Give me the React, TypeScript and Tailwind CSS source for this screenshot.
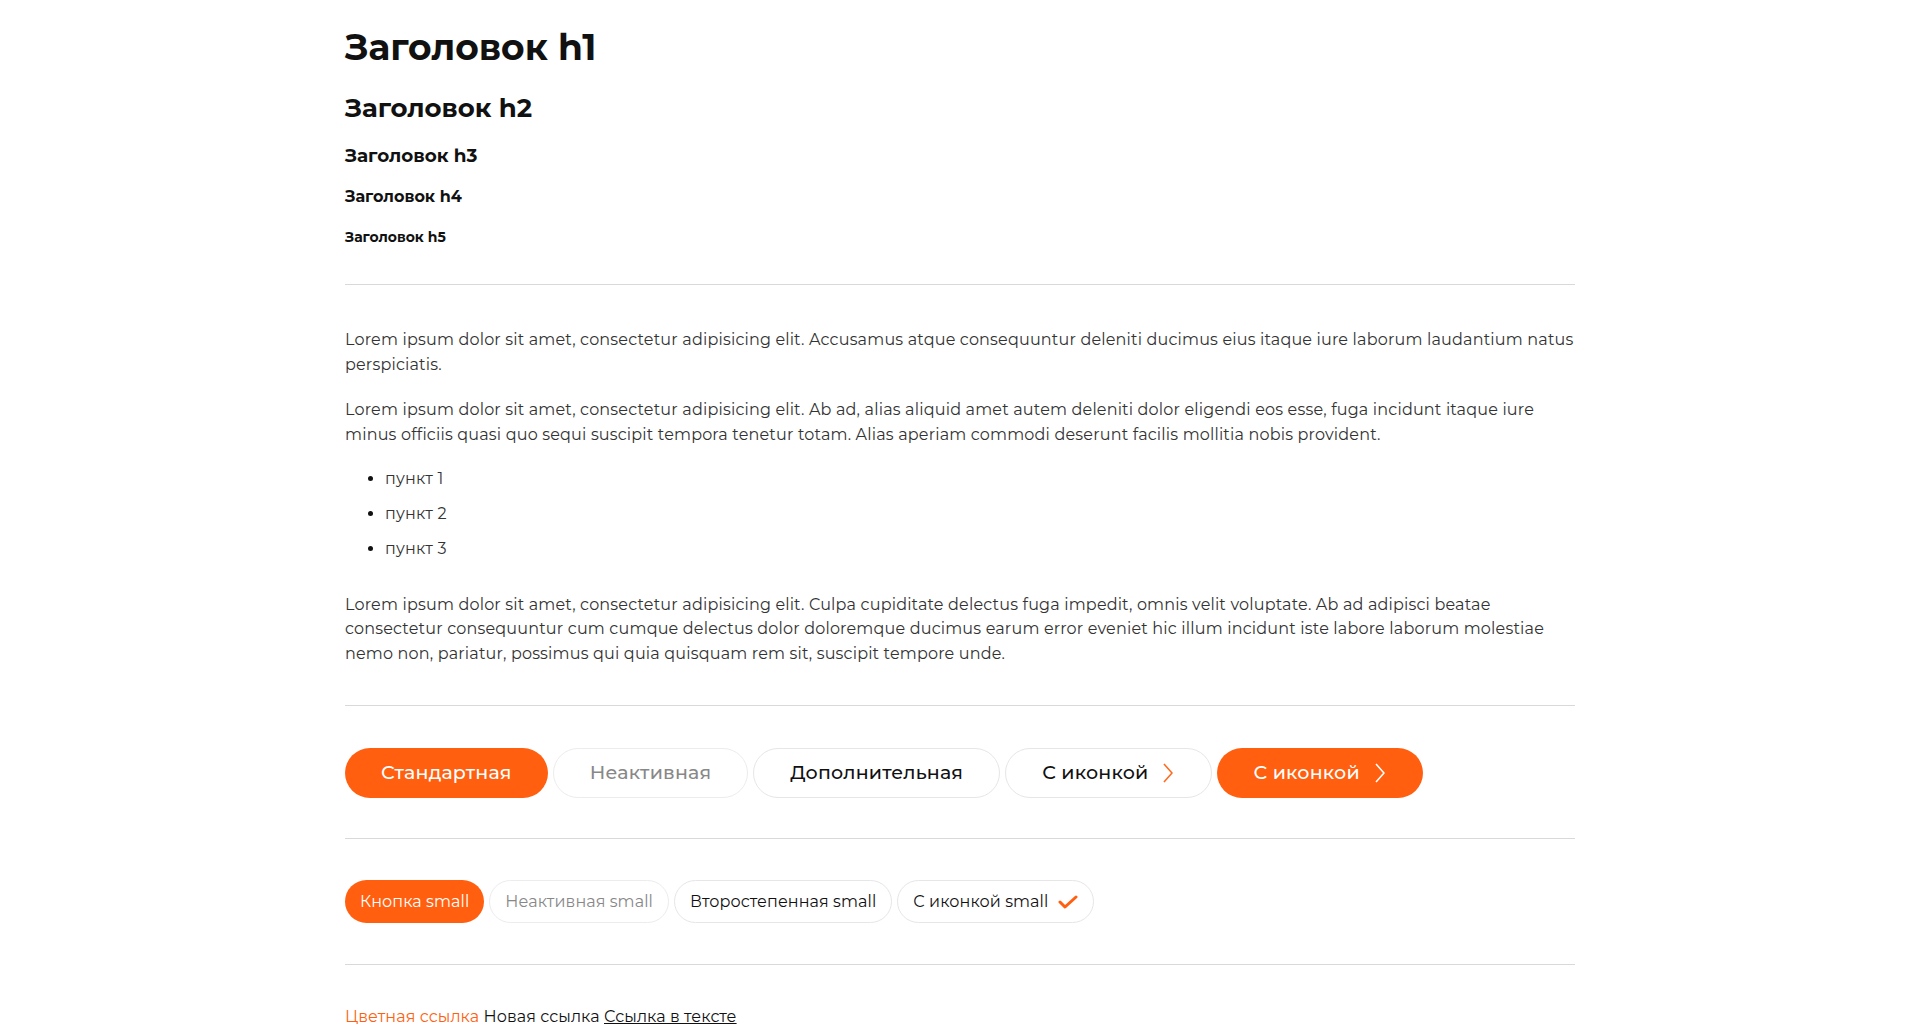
// Типографика и кнопки — страница-витрина UI-кита.
const font = "font-['Montserrat','Open_Sans',sans-serif]";

function Chevron({ className }: { className?: string }) {
  return (
    <svg viewBox="0 0 10 20" className={className} fill="none" stroke="currentColor" strokeWidth="1.6">
      <path d="M1 1l8 9-8 9" />
    </svg>
  );
}

function Check({ className }: { className?: string }) {
  return (
    <svg viewBox="0 0 20 14" className={className} fill="none" stroke="currentColor" strokeWidth="3" strokeLinecap="round" strokeLinejoin="round">
      <path d="M2 7l5 5L18 2" />
    </svg>
  );
}

const btn = "inline-flex items-center justify-center rounded-full h-[50px] px-9 text-[19px] tracking-[0.2px] font-medium";
const btnSm = "inline-flex items-center justify-center rounded-full h-[43px] px-[15px] text-[16px] tracking-[0.08px]";

export default function App() {
  return (
    <div className={`${font} bg-white min-h-screen`}>
      <div className="mx-auto w-[1230px] pt-[25px] pb-10">
        <h1 className="text-[36px] leading-[44px] font-bold text-[#111]">Заголовок h1</h1>
        <h2 className="mt-[23px] text-[26px] leading-[32px] font-bold text-[#111]">Заголовок h2</h2>
        <h3 className="mt-[21px] text-[18.4px] leading-[22px] font-bold text-[#111]">Заголовок h3</h3>
        <h4 className="mt-[20px] text-[16px] leading-5 font-bold text-[#111]">Заголовок h4</h4>
        <h5 className="mt-[21px] text-[14px] leading-[18px] font-bold text-[#111]">Заголовок h5</h5>

        <hr className="mt-[38px] mb-[43px] border-[#d9d9d9]" />

        <div className="text-[16px] leading-[24.5px] tracking-[0.18px] text-[#333]">
          <p>
            Lorem ipsum dolor sit amet, consectetur adipisicing elit. Accusamus atque consequuntur deleniti ducimus eius
            itaque iure laborum laudantium natus perspiciatis.
          </p>
          <p className="mt-[21px]">
            Lorem ipsum dolor sit amet, consectetur adipisicing elit. Ab ad, alias aliquid amet autem deleniti dolor
            eligendi eos esse, fuga incidunt itaque iure minus officiis quasi quo sequi suscipit tempora tenetur totam.
            Alias aperiam commodi deserunt facilis mollitia nobis provident.
          </p>
          <ul className="mt-[20px] list-disc pl-10 space-y-[10.5px] marker:text-[#111]">
            <li>пункт 1</li>
            <li>пункт 2</li>
            <li>пункт 3</li>
          </ul>
          <p className="mt-[31px]">
            Lorem ipsum dolor sit amet, consectetur adipisicing elit. Culpa cupiditate delectus fuga impedit, omnis velit
            voluptate. Ab ad adipisci beatae consectetur consequuntur cum cumque delectus dolor doloremque ducimus earum
            error eveniet hic illum incidunt iste labore laborum molestiae nemo non, pariatur, possimus qui quia quisquam
            rem sit, suscipit tempore unde.
          </p>
        </div>

        <hr className="mt-[39px] mb-[42px] border-[#d9d9d9]" />

        <div className="flex items-center gap-[5px]">
          <button className={`${btn} bg-[#ff5f0f] text-white`}>Стандартная</button>
          <button className={`${btn} border border-[#ececec] text-[#888]`}>Неактивная</button>
          <button className={`${btn} border border-[#e6e6e6] text-[#111]`}>Дополнительная</button>
          <button className={`${btn} border border-[#e6e6e6] text-[#111] gap-[15px] pr-[38px]`}>
            С иконкой
            <Chevron className="w-[10px] h-[20px] text-[#ff6a1f]" />
          </button>
          <button className={`${btn} bg-[#ff5f0f] text-white gap-[15px] pr-[38px]`}>
            С иконкой
            <Chevron className="w-[10px] h-[20px] text-white" />
          </button>
        </div>

        <hr className="mt-10 mb-[41px] border-[#d9d9d9]" />

        <div className="flex items-center gap-[5px]">
          <button className={`${btnSm} bg-[#ff5f0f] text-white`}>Кнопка small</button>
          <button className={`${btnSm} border border-[#ececec] text-[#888]`}>Неактивная small</button>
          <button className={`${btnSm} border border-[#e6e6e6] text-[#111]`}>Второстепенная small</button>
          <button className={`${btnSm} border border-[#e6e6e6] text-[#111] gap-[10px]`}>
            С иконкой small
            <Check className="w-[20px] h-[14px] text-[#ff5f0f]" />
          </button>
        </div>

        <hr className="mt-[41px] mb-[40px] border-[#d9d9d9]" />

        <div className="text-[16px] leading-6 tracking-[0.08px] text-[#111]">
          <a href="#" className="text-[#ff5f0f]">Цветная ссылка</a>{" "}
          <a href="#">Новая ссылка</a>{" "}
          <a href="#" className="underline">Ссылка в тексте</a>
        </div>
      </div>
    </div>
  );
}
